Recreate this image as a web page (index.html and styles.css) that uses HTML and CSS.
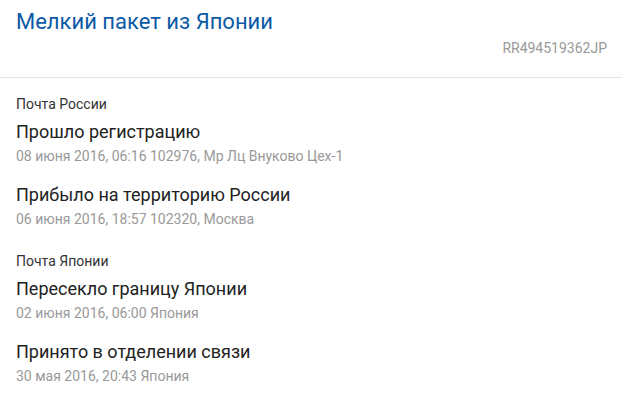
FILE: index.html
```html
<!DOCTYPE html>
<html lang="ru">
<head>
    <meta charset="UTF-8">
    <link rel="stylesheet" href="styles.css">
</head>
<body>
    <div class="header">
        <h1 class="title">Мелкий пакет из Японии</h1>
        <div class="track">RR494519362JP</div>
    </div>
    <div class="history">
        <div class="group">
            <div class="group-name">Почта России</div>
            <div class="event">
                <div class="event-name">Прошло регистрацию</div>
                <div class="event-info">08 июня 2016, 06:16 102976, Мр Лц Внуково Цех-1</div>
            </div>
            <div class="event">
                <div class="event-name">Прибыло на территорию России</div>
                <div class="event-info">06 июня 2016, 18:57 102320, Москва</div>
            </div>
        </div>
        <div class="group">
            <div class="group-name">Почта Японии</div>
            <div class="event">
                <div class="event-name">Пересекло границу Японии</div>
                <div class="event-info">02 июня 2016, 06:00 Япония</div>
            </div>
            <div class="event">
                <div class="event-name">Принято в отделении связи</div>
                <div class="event-info">30 мая 2016, 20:43 Япония</div>
            </div>
        </div>
    </div>
</body>
</html>
```

FILE: styles.css
```css
body {
    margin: 0;
    font-family: Roboto, "Liberation Sans", sans-serif;
    background: #fff;
    color: #222;
}
.header {
    padding: 8px 15px 19px 16px;
    border-bottom: 1px solid #e5e5e5;
}
.title {
    margin: 0;
    font-size: 22px;
    font-weight: 400;
    line-height: 28px;
    color: #0b5aa6;
}
.track {
    text-align: right;
    font-size: 14px;
    line-height: 20px;
    color: #999;
    margin-top: 2px;
}
.history {
    padding: 17px 16px 0 16px;
}
.group {
    margin-bottom: 23px;
}
.group-name {
    font-size: 14px;
    line-height: 18px;
    color: #333;
    margin-bottom: 7px;
}
.event {
    margin-bottom: 17px;
}
.event-name {
    font-size: 18px;
    line-height: 24px;
    color: #222;
}
.event-info {
    margin-top: 2px;
    font-size: 14px;
    line-height: 20px;
    color: #999;
}
```
